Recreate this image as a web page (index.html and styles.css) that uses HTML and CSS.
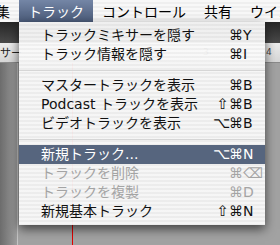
FILE: index.html
```html
<!DOCTYPE html>
<html lang="ja">
<head>
  <meta charset="UTF-8" />
  <title>GarageBand トラック</title>
  <link rel="stylesheet" href="styles.css">
</head>
<body>
  <div class="screen">
    <div class="menubar">
      <span class="title title-cut">編集</span>
      <span class="title active">トラック</span>
      <span class="title">コントロール</span>
      <span class="title">共有</span>
      <span class="title">ウインドウ</span>
    </div>

    <div class="window">
      <div class="head-band"></div>
      <div class="ruler">
        <span class="ruler-label">サー</span>
        <span class="bar-num bar-3">3</span>
        <span class="bar-num bar-4">4</span>
      </div>
      <div class="lanes">
        <div class="track-col"></div>
        <div class="lane-area">
          <div class="playhead"></div>
        </div>
      </div>
    </div>

    <!-- open menu -->
    <div class="menu">
      <div class="item"><span class="label">トラックミキサーを隠す</span><span class="keys"><span class="mod"></span><span class="cmd">⌘</span><span class="key">Y</span></span></div>
      <div class="item"><span class="label">トラック情報を隠す</span><span class="keys"><span class="mod"></span><span class="cmd">⌘</span><span class="key">I</span></span></div>
      <div class="sep"></div>
      <div class="item"><span class="label">マスタートラックを表示</span><span class="keys"><span class="mod"></span><span class="cmd">⌘</span><span class="key">B</span></span></div>
      <div class="item"><span class="label">Podcast トラックを表示</span><span class="keys"><span class="mod">⇧</span><span class="cmd">⌘</span><span class="key">B</span></span></div>
      <div class="item"><span class="label">ビデオトラックを表示</span><span class="keys"><span class="mod">⌥</span><span class="cmd">⌘</span><span class="key">B</span></span></div>
      <div class="sep"></div>
      <div class="item selected"><span class="label">新規トラック...</span><span class="keys"><span class="mod">⌥</span><span class="cmd">⌘</span><span class="key">N</span></span></div>
      <div class="item disabled"><span class="label">トラックを削除</span><span class="keys"><span class="mod"></span><span class="cmd">⌘</span><span class="key">⌫</span></span></div>
      <div class="item disabled"><span class="label">トラックを複製</span><span class="keys"><span class="mod"></span><span class="cmd">⌘</span><span class="key">D</span></span></div>
      <div class="item"><span class="label">新規基本トラック</span><span class="keys"><span class="mod">⇧</span><span class="cmd">⌘</span><span class="key">N</span></span></div>
    </div>
  </div>
</body>
</html>
```

FILE: styles.css
```css
body {
  margin: 0;
  font-family: "DejaVu Sans", "Noto Sans CJK JP", sans-serif;
}

.screen {
  position: relative;
  width: 280px;
  height: 245px;
  overflow: hidden;
  background: #9e9e9e;
}

/* menu bar */
.menubar {
  display: flex;
  height: 22px;
  line-height: 22px;
  font-size: 14px;
  color: #000;
  white-space: nowrap;
  background: repeating-linear-gradient(to bottom, #f8f8f8 0, #f8f8f8 2px, #efefef 2px, #efefef 4px);
}

.title {
  padding: 0 9px;
  font-family: "Noto Sans CJK JP", sans-serif;
}

.title-cut {
  margin-left: -27px;
}

.title.active {
  color: #fff;
  background: linear-gradient(to bottom, #7486a6, #4a5a78);
}

/* window behind the menu */
.window {
  display: flex;
  flex-direction: column;
  height: 223px;
}

.head-band {
  height: 21px;
  background: linear-gradient(to bottom, #262626, #4a4a4a);
}

.ruler {
  position: relative;
  height: 19px;
  background: linear-gradient(to bottom, #ececec, #d6d6d6);
  border-bottom: 1px solid #8a8a8a;
}

.ruler-label {
  display: block;
  padding-top: 3px;
  font-family: "Noto Sans CJK JP", sans-serif;
  font-size: 11px;
  line-height: 13px;
  color: #222;
}

.bar-num {
  position: absolute;
  top: 4px;
  font-size: 9px;
  color: #444;
}

.bar-3 { left: 203px; }
.bar-4 { left: 266px; }

.lanes {
  flex: 1;
  display: flex;
}

.track-col {
  width: 17px;
  background: linear-gradient(to right, #6c6c6c, #9c9c9c);
  border-right: 1px solid #c4c4c4;
}

.lane-area {
  position: relative;
  flex: 1;
  background: #a2a2a2;
}

.playhead {
  position: absolute;
  left: 54px;
  top: 0;
  bottom: 0;
  width: 1px;
  background: #e10000;
}

/* dropdown */
.menu {
  position: absolute;
  left: 19px;
  top: 22px;
  width: 246px;
  padding: 4px 0;
  font-size: 14px;
  color: #111;
  background: repeating-linear-gradient(to bottom, rgba(250,250,250,.95) 0, rgba(250,250,250,.95) 2px, rgba(240,240,240,.95) 2px, rgba(240,240,240,.95) 4px);
  box-shadow: 0 4px 10px rgba(0, 0, 0, .6);
}

.item {
  display: flex;
  align-items: center;
  height: 19px;
  line-height: 19px;
  padding: 0 4px 0 22px;
  white-space: nowrap;
}

.label {
  flex: 1;
}

.keys {
  display: flex;
  font-family: "DejaVu Sans", sans-serif;
  font-size: 14px;
}

.mod {
  width: 16px;
  text-align: right;
  font-size: 15px;
}

.cmd {
  width: 13px;
  text-align: center;
}

.key {
  width: 18px;
  padding-left: 1px;
}

.selected {
  color: #fff;
  background: #56657e;
}

.disabled {
  color: #a4a4a4;
}

.sep {
  height: 12px;
  display: flex;
  align-items: center;
}

.sep::after {
  content: "";
  flex: 1;
  height: 1px;
  background: #d6d6d6;
}
```
